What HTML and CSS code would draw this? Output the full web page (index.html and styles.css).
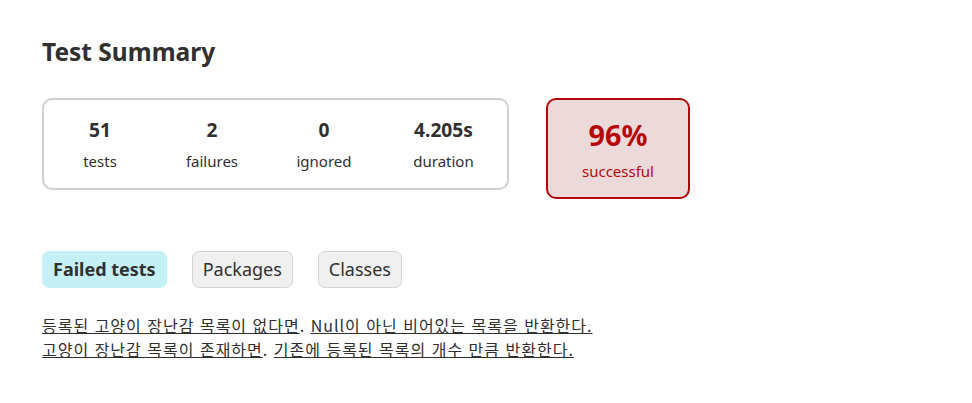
FILE: index.html
```html
<!DOCTYPE html>
<html lang="ko">
<head>
<meta charset="utf-8">
<title>Test Summary</title>
<link rel="stylesheet" href="styles.css">
</head>
<body>
<div class="content">
  <h1 class="title">Test Summary</h1>
  <div class="summary">
    <div class="summary-group">
      <div class="info-box">
        <p class="counter">51</p>
        <p class="label">tests</p>
      </div>
      <div class="info-box">
        <p class="counter">2</p>
        <p class="label">failures</p>
      </div>
      <div class="info-box">
        <p class="counter">0</p>
        <p class="label">ignored</p>
      </div>
      <div class="info-box info-box-wide">
        <p class="counter">4.205s</p>
        <p class="label">duration</p>
      </div>
    </div>
    <div class="success-rate">
      <p class="percent">96%</p>
      <p class="label">successful</p>
    </div>
  </div>
  <ul class="tab-links">
    <li class="tab selected"><h2 class="tab-title">Failed tests</h2></li>
    <li class="tab"><a class="tab-link" href="#packages">Packages</a></li>
    <li class="tab"><a class="tab-link" href="#classes">Classes</a></li>
  </ul>
  <ul class="link-list">
    <li class="link-item"><a class="test-link" href="#c1">등록된 고양이 장난감 목록이 없다면</a>. <a class="test-link" href="#t1">Null이 아닌 비어있는 목록을 반환한다.</a></li>
    <li class="link-item"><a class="test-link" href="#c2">고양이 장난감 목록이 존재하면</a>. <a class="test-link" href="#t2">기존에 등록된 목록의 개수 만큼 반환한다.</a></li>
  </ul>
</div>
</body>
</html>
```

FILE: styles.css
```css
html, body {
  margin: 0;
  padding: 0;
  background: #ffffff;
}
body {
  font-family: "Noto Sans", "Noto Sans CJK KR", sans-serif;
  font-size: 16px;
  color: #303030;
}
.content {
  padding: 30px 42px;
}
.title {
  margin: 0;
  padding-top: 7px;
  font-size: 24.5px;
  line-height: 30px;
  font-weight: bold;
  color: #303030;
}
.summary {
  display: flex;
  align-items: flex-start;
  margin-top: 31px;
}
.summary-group {
  display: flex;
  border: 2px solid #d0d0d0;
  border-radius: 10px;
}
.info-box {
  width: 112px;
  padding: 18px 0 14px;
  text-align: center;
}
.info-box-wide {
  width: 127px;
}
.info-box p, .success-rate p {
  margin: 0;
}
.counter {
  font-size: 19.2px;
  line-height: 23px;
  font-weight: bold;
  margin-bottom: 8px !important;
}
.label {
  font-size: 15px;
  line-height: 25px;
}
.success-rate {
  width: 140px;
  margin-left: 37px;
  padding: 18px 0 13px;
  text-align: center;
  background: #ecdada;
  border: 2px solid #b60808;
  border-radius: 10px;
  color: #b60808;
}
.percent {
  font-size: 28.8px;
  line-height: 33px;
  font-weight: bold;
  margin-bottom: 8px !important;
}
.tab-links {
  display: flex;
  list-style: none;
  margin: 52px 0 0;
  padding: 0;
}
.tab {
  padding: 5px 10px;
  margin-right: 25px;
  border: 1px solid #d4d4d4;
  border-radius: 7px;
  background: #f0f0f0;
}
.tab.selected {
  background: #c5f0f5;
  border-color: #c5f0f5;
}
.tab-title {
  margin: 0;
  font-size: 18px;
  line-height: 25px;
  font-weight: bold;
}
.tab-link {
  display: block;
  font-size: 18px;
  line-height: 25px;
  color: #303030;
  text-decoration: none;
}
.link-list {
  list-style: none;
  margin: 25px 0 0;
  padding: 0;
  font-family: "Noto Sans CJK KR", "Noto Sans", sans-serif;
  font-size: 16px;
  letter-spacing: 1px;
}
.link-item {
  line-height: 24px;
  margin: 0;
}
.test-link {
  color: #303030;
  text-decoration: underline;
}
```
